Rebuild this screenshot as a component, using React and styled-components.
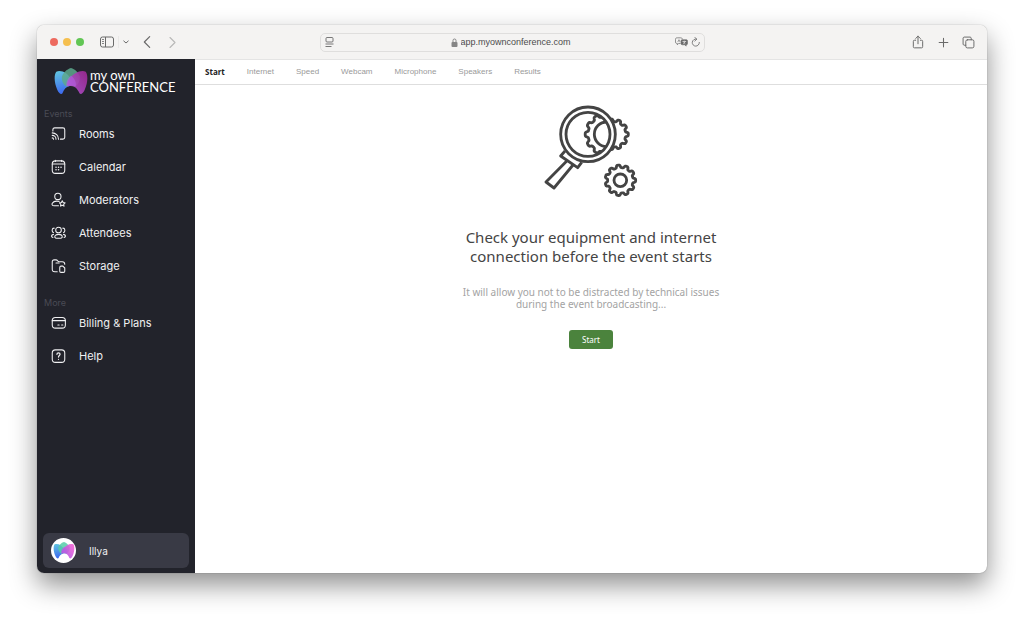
import React, { useState } from "react";
import styled, { createGlobalStyle } from "styled-components";

const GlobalStyle = createGlobalStyle`
  *, *::before, *::after {
    box-sizing: border-box;
  }
  body {
    margin: 0;
    background: #fff;
    font-family: "Noto Sans", sans-serif;
    -webkit-font-smoothing: antialiased;
  }
  button, input {
    font: inherit;
    color: inherit;
    background: none;
    border: 0;
    padding: 0;
    margin: 0;
  }
  button {
    cursor: pointer;
  }
  a {
    color: inherit;
    text-decoration: none;
  }
`;

const Desktop = styled.div`
  display: flex;
  min-height: 100vh;
  padding: 25px 37px 49px;
`;

const Window = styled.div`
  flex: 1;
  display: flex;
  flex-direction: column;
  overflow: hidden;
  border-radius: 7px;
  background: #fff;
  box-shadow: 0 0 1px rgba(0, 0, 0, 0.5), 0 12px 27px rgba(0, 0, 0, 0.44);
`;

const TitleBar = styled.header`
  display: grid;
  grid-template-columns: 1fr 385px 1fr;
  align-items: center;
  height: 34px;
  padding: 0 12px 0 13px;
  background: #f4f3f2;
  color: #6a6a6a;
`;

const BarGroup = styled.div`
  display: flex;
  align-items: center;
  justify-content: ${(p) => (p.$end ? "flex-end" : "flex-start")};
  gap: ${(p) => p.$gap}px;
`;

const Lights = styled.div`
  display: flex;
  gap: 5px;
  margin-right: 6px;
`;

const Light = styled.span`
  width: 8px;
  height: 8px;
  border-radius: 50%;
  background: ${(p) => p.$color};
`;

const Divider = styled.span`
  width: 1px;
  height: 12px;
  background: #e9e8e7;
`;

const IconButton = styled.button`
  display: flex;
  color: ${(p) => (p.$faded ? "#b9b9b8" : "#6a6a6a")};
  svg {
    display: block;
  }
`;

const AddressBar = styled.div`
  display: flex;
  align-items: center;
  height: 19px;
  padding: 0 3px 0 4px;
  border: 1px solid #dfdedd;
  border-radius: 5px;
`;

const Address = styled.label`
  flex: 1;
  display: flex;
  align-items: center;
  justify-content: center;
  gap: 3px;
  padding-left: 16px;
`;

const AddressInput = styled.input`
  width: 114px;
  font-family: "Liberation Sans", sans-serif;
  font-size: 9px;
  line-height: 12px;
  color: #4c4c4c;
  outline: none;
`;

const Body = styled.div`
  flex: 1;
  display: flex;
`;

const Sidebar = styled.aside`
  display: flex;
  flex-direction: column;
  width: 158px;
  padding: 7px 6px 5px;
  background: #22232b;
  color: #f0f0f2;
  font-family: Inter, sans-serif;
`;

const Brand = styled.a`
  display: flex;
  align-items: center;
  gap: 2px;
  padding-left: 11px;
  height: 30px;
`;

const BrandName = styled.span`
  font-family: Lato, sans-serif;
  font-size: 13px;
  line-height: 12px;
  color: #fff;
  span {
    display: block;
  }
`;

const NavTitle = styled.h2`
  margin: ${(p) => (p.$first ? "12px" : "15px")} 0 0;
  padding-left: 1px;
  font-size: 9px;
  font-weight: 400;
  line-height: 12px;
  color: #4a4b55;
`;

const NavList = styled.ul`
  list-style: none;
  margin: -3px 0 0;
  padding: 0;
`;

const NavLink = styled.a`
  display: flex;
  align-items: center;
  gap: 13px;
  height: 33px;
  padding-left: 8px;
  font-size: 11px;
`;

const UserButton = styled.button`
  display: flex;
  align-items: center;
  gap: 13px;
  height: 35px;
  margin-top: auto;
  padding-left: 8px;
  border-radius: 6px;
  background: #393a45;
  font-size: 10px;
`;

const Avatar = styled.span`
  display: grid;
  place-items: center;
  width: 25px;
  height: 25px;
  border-radius: 50%;
  background: #fff;
`;

const Main = styled.main`
  flex: 1;
  display: flex;
  flex-direction: column;
`;

const Steps = styled.nav`
  display: flex;
  align-items: center;
  gap: 22px;
  height: 26px;
  padding-left: 10px;
  border-top: 1px solid #e4e4e4;
  border-bottom: 1px solid #dedede;
`;

const Step = styled.button`
  font-family: ${(p) => (p.$active ? '"Open Sans"' : '"Liberation Sans"')}, sans-serif;
  font-size: 8px;
  line-height: 12px;
  font-weight: ${(p) => (p.$active ? 700 : 400)};
  color: ${(p) => (p.$active ? "#222" : "#999")};
`;

const Intro = styled.section`
  display: flex;
  flex-direction: column;
  align-items: center;
  padding: 20px 20px 40px;
  text-align: center;
`;

const Title = styled.h1`
  max-width: 280px;
  margin: 30px 0 0;
  font-size: 15px;
  font-weight: 400;
  line-height: 19px;
  color: #444;
`;

const Hint = styled.p`
  max-width: 280px;
  margin: 20px 0;
  font-size: 10px;
  line-height: 12px;
  color: #a3a3a3;
`;

const StartButton = styled.button`
  width: 44px;
  height: 19px;
  border-radius: 3px;
  background: #4b833d;
  color: #fff;
  font-size: 8px;
`;

const Icon = ({ size = 14, box = 24, width = 1.8, children }) => (
  <svg
    width={size}
    height={size}
    viewBox={`0 0 ${box} ${box}`}
    fill="none"
    stroke="currentColor"
    strokeWidth={width}
    strokeLinecap="round"
    strokeLinejoin="round"
    aria-hidden="true"
  >
    {children}
  </svg>
);

const Petals = ({ id, width, height, bright }) => (
  <svg width={width} height={height} viewBox="0 0 104 82" aria-hidden="true">
    <defs>
      <linearGradient id={`${id}-blue`} x1="0" y1="0" x2="0.2" y2="1">
        <stop offset="0" stopColor="#62c8df" />
        <stop offset="1" stopColor="#3e6cf0" />
      </linearGradient>
      <linearGradient id={`${id}-pink`} x1="0" y1="1" x2="1" y2="0.2">
        <stop offset="0" stopColor={bright ? "#a052e8" : "#b558dc"} />
        <stop offset="1" stopColor={bright ? "#f062d4" : "#a02c98"} />
      </linearGradient>
    </defs>
    <path
      d="M7 11C20 5 44 13 52 36C54 46 52 54 48 55C36 58 30 66 26 77C22 83 14 76 10 66C1 46-1 22 7 11Z"
      fill={`url(#${id}-blue)`}
    />
    <path
      d="M52 0C64 3 74 14 79 25C80 40 74 50 64 57C56 53 46 53 38 57C29 50 23 40 24 27C28 15 38 4 52 0Z"
      fill={bright ? "#56cda8" : "#5da98d"}
      opacity="0.85"
    />
    <path
      d="M97 11C84 5 60 13 44 37C38 48 40 58 46 55C62 52 72 62 78 77C82 83 90 76 94 66C103 46 105 22 97 11Z"
      fill={`url(#${id}-pink)`}
      opacity="0.9"
    />
    <path d="M52 23C62 31 70 45 66 56C58 52 46 52 38 56C36 43 42 31 52 23Z" fill="#b75ee6" opacity="0.55" />
  </svg>
);

// outline of a cog with rounded teeth, the first tooth pointing at angle "start"
const cogPath = (cx, cy, radius, depth, teeth, start = 0) => {
  const count = teeth * 20;
  const points = [];
  for (let i = 0; i < count; i++) {
    const angle = (i / count) * Math.PI * 2;
    const wave = Math.tanh(2.2 * Math.cos(angle * teeth));
    const r = radius + depth * wave;
    const x = cx + r * Math.cos(angle + start);
    const y = cy + r * Math.sin(angle + start);
    points.push(`${x.toFixed(1)} ${y.toFixed(1)}`);
  }
  return `M${points.join("L")}Z`;
};

const CheckDrawing = () => (
  <svg
    width="94"
    height="93"
    viewBox="43 30 282 279"
    fill="none"
    stroke="#444"
    strokeWidth="8.5"
    strokeLinejoin="round"
    aria-hidden="true"
  >
    <defs>
      <clipPath id="lens">
        <circle cx="175" cy="118" r="66" />
      </clipPath>
      <clipPath id="outside">
        <path clipRule="evenodd" d="M0 0H400V330H0ZM93 118a82 82 0 1 0 164 0a82 82 0 1 0-164 0Z" />
      </clipPath>
    </defs>
    <g clipPath="url(#lens)">
      <path d={cogPath(229, 118, 58, 4.5, 12, Math.PI)} />
      <circle cx="231" cy="118" r="37" />
    </g>
    <path clipPath="url(#outside)" d={cogPath(250, 118, 42, 4, 11)} />
    <circle cx="175" cy="118" r="82" />
    <circle cx="175" cy="118" r="66" />
    <path d="M106 168L93 183L144 218L156 202M112 197L49 261L73 279L130 210" />
    <path d={cogPath(272, 256, 42, 4, 11)} />
    <circle cx="272" cy="256" r="19" />
  </svg>
);

const icons = {
  rooms: (
    <>
      <path d="M3 8V6C3 4 4 3 6 3H19C21 3 22 4 22 6V18C22 20 21 21 19 21H15" />
      <path d="M2 11A10 10 0 0 1 12 21M2 15A6 6 0 0 1 8 21M2 19A2 2 0 0 1 4 21" />
    </>
  ),
  calendar: (
    <>
      <rect x="2" y="3" width="20" height="20" rx="5" />
      <path d="M2 8H22M7 2V4M17 2V4" />
      <path d="M8 13H8.1M12 13H12.1M16 13H16.1M8 17H8.1M12 17H12.1" strokeWidth="2.4" />
    </>
  ),
  moderators: (
    <>
      <circle cx="11" cy="7" r="5" />
      <path d="M12 22H5C2 22 1 20 2 18C4 15 8 14 13 15" />
      <path d="M18 14L19.4 16.8L22.5 17.3L20.3 19.5L20.8 22.6L18 21.2L15.2 22.6L15.7 19.5L13.5 17.3L16.6 16.8Z" />
    </>
  ),
  attendees: (
    <>
      <circle cx="12" cy="8" r="4.5" />
      <path d="M12 15C8 15 6 17 6 19C6 22 18 22 18 19C18 17 16 15 12 15Z" />
      <path d="M5 5C1 5 1 11 4 12M19 5C23 5 23 11 20 12M4 15C0 16 0 19 3 20M20 15C24 16 24 19 21 20" />
    </>
  ),
  storage: (
    <>
      <path d="M10 22H6C3 22 2 21 2 18V6C2 4 3 3 5 3H8C11 3 10 6 13 6H18C21 6 22 8 22 10" />
      <path d="M8 8H13" />
      <path d="M16 13H19L22 16V21C22 22 21 23 20 23H16C15 23 14 22 14 21V15C14 14 15 13 16 13Z" />
    </>
  ),
  billing: (
    <>
      <rect x="2" y="4" width="21" height="17" rx="5" />
      <path d="M2 9H23M11 16H13M17 16H19" />
    </>
  ),
  help: (
    <>
      <rect x="2" y="3" width="20" height="20" rx="5" />
      <path d="M9.5 10C9.5 7 14.5 7 14.5 10C14.5 12 12 12 12 14.5M12 18V18.1" strokeWidth="2" />
    </>
  ),
};

const events = [
  { icon: "rooms", label: "Rooms" },
  { icon: "calendar", label: "Calendar" },
  { icon: "moderators", label: "Moderators" },
  { icon: "attendees", label: "Attendees" },
  { icon: "storage", label: "Storage" },
];

const more = [
  { icon: "billing", label: "Billing & Plans" },
  { icon: "help", label: "Help" },
];

const steps = ["Start", "Internet", "Speed", "Webcam", "Microphone", "Speakers", "Results"];

const Nav = ({ items }) => (
  <NavList>
    {items.map((item) => (
      <li key={item.label}>
        <NavLink href="#">
          <Icon size={15} width={1.7}>{icons[item.icon]}</Icon>
          {item.label}
        </NavLink>
      </li>
    ))}
  </NavList>
);

const BrowserBar = () => (
  <TitleBar>
    <BarGroup $gap={10}>
      <Lights>
        <Light $color="#ed6a5f" />
        <Light $color="#f5bf4f" />
        <Light $color="#62c655" />
      </Lights>
      <BarGroup $gap={4}>
        <IconButton aria-label="Show sidebar">
          <svg width="14" height="12" viewBox="0 0 14 12" fill="none" stroke="currentColor" aria-hidden="true">
            <rect x="0.5" y="1" width="13" height="10" rx="2" />
            <path d="M5.5 1V11" />
            <path d="M2 3.5H4M2 5.5H4M2 7.5H4" strokeWidth="0.8" />
          </svg>
        </IconButton>
        <Divider />
        <IconButton aria-label="Tab groups">
          <Icon size={6} width={4}><path d="M3 8L12 16L21 8" /></Icon>
        </IconButton>
      </BarGroup>
      <IconButton aria-label="Back">
        <Icon size={16}><path d="M16 4L8 12L16 20" /></Icon>
      </IconButton>
      <IconButton aria-label="Forward" $faded>
        <Icon size={15}><path d="M8 4L16 12L8 20" /></Icon>
      </IconButton>
    </BarGroup>
    <AddressBar>
      <IconButton aria-label="Page settings">
        <svg width="9" height="10" viewBox="0 0 9 10" fill="none" stroke="currentColor" strokeWidth="0.9" aria-hidden="true">
          <rect x="1" y="0.5" width="7" height="4.5" rx="1" />
          <path d="M0.5 7H8.5M0.5 9.5H6.5" />
        </svg>
      </IconButton>
      <Address>
        <svg width="7" height="9" viewBox="0 0 7 9" aria-hidden="true">
          <rect x="0.5" y="4" width="6" height="5" rx="1" fill="#858585" />
          <path d="M2 4V2.5A1.5 1.5 0 0 1 5 2.5V4" fill="none" stroke="#858585" />
        </svg>
        <AddressInput aria-label="Address" defaultValue="app.myownconference.com" />
      </Address>
      <BarGroup $gap={3}>
        <IconButton aria-label="Translate">
          <svg width="13" height="10" viewBox="0 0 14 10" fill="none" stroke="currentColor" aria-hidden="true">
            <path d="M6 6.5H4L2.5 8V6.5C1 6.5 0.5 6 0.5 5V2.5C0.5 1 1 0.5 2.5 0.5H6C7 0.5 8 1 8 2" strokeWidth="0.8" />
            <path d="M3 5L4.3 2.5L5.5 5" strokeWidth="0.7" />
            <path d="M7.5 2.5H12C13 2.5 13.5 3 13.5 4V6.5C13.5 7.5 13 8 12 8V9.5L10.5 8H8C7 8 6.5 7.5 6.5 6.5V4C6.5 3 7 2.5 7.5 2.5Z" fill="currentColor" strokeWidth="0.6" />
            <path d="M8 4.5H12M10 3.5V4.5M9 7L11.2 4.5M9 5L11.2 7" stroke="#f4f3f2" strokeWidth="0.7" />
          </svg>
        </IconButton>
        <IconButton aria-label="Reload">
          <Icon size={10} width={2}>
            <path d="M20 13A8.5 8.5 0 1 1 13 5M9 1L14 5L9 10" />
          </Icon>
        </IconButton>
      </BarGroup>
    </AddressBar>
    <BarGroup $end $gap={12}>
      <IconButton aria-label="Share">
        <Icon size={14} width={1.7}>
          <path d="M8 9H6C4 9 4 10 4 11V20C4 21 4 22 6 22H18C20 22 20 21 20 20V11C20 10 20 9 18 9H16M12 15V2M8 6L12 2L16 6" />
        </Icon>
      </IconButton>
      <IconButton aria-label="New tab">
        <Icon size={13} width={2}><path d="M12 4V20M4 12H20" /></Icon>
      </IconButton>
      <IconButton aria-label="Tab overview">
        <Icon size={13} width={1.8}>
          <rect x="7" y="7" width="15" height="15" rx="3" />
          <path d="M7 17H4C3 17 2 16 2 15V4C2 3 3 2 4 2H15C16 2 17 3 17 4V7" />
        </Icon>
      </IconButton>
    </BarGroup>
  </TitleBar>
);

const App = () => {
  const [step, setStep] = useState("Start");

  return (
    <>
      <GlobalStyle />
      <Desktop>
        <Window>
          <BrowserBar />
          <Body>
            <Sidebar>
              <Brand href="#">
                <Petals id="brand" width={34} height={27} />
                <BrandName>
                  <span>my own</span>
                  <span>CONFERENCE</span>
                </BrandName>
              </Brand>
              <NavTitle $first>Events</NavTitle>
              <Nav items={events} />
              <NavTitle>More</NavTitle>
              <Nav items={more} />
              <UserButton>
                <Avatar>
                  <Petals id="avatar" width={22} height={17} bright />
                </Avatar>
                Illya
              </UserButton>
            </Sidebar>
            <Main>
              <Steps>
                {steps.map((name) => (
                  <Step key={name} $active={name === step} onClick={() => setStep(name)}>
                    {name}
                  </Step>
                ))}
              </Steps>
              <Intro>
                <CheckDrawing />
                <Title>Check your equipment and internet connection before the event starts</Title>
                <Hint>
                  It will allow you not to be distracted by technical issues during the event
                  broadcasting...
                </Hint>
                <StartButton onClick={() => setStep("Internet")}>Start</StartButton>
              </Intro>
            </Main>
          </Body>
        </Window>
      </Desktop>
    </>
  );
};

export default App;
